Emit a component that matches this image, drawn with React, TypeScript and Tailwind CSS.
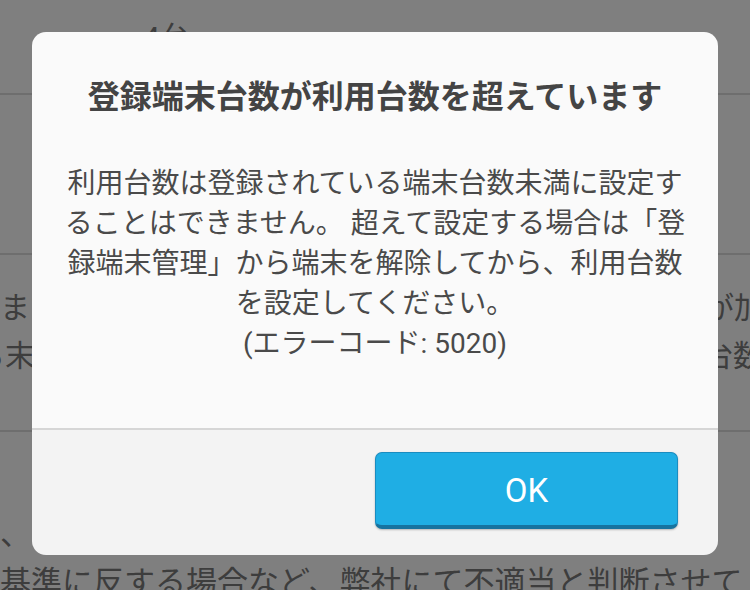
import React from 'react';

const bodyLines = [
  '利用台数は登録されている端末台数未満に設定す',
  'ることはできません。 超えて設定する場合は「登',
  '録端末管理」から端末を解除してから、利用台数',
  'を設定してください。',
  '(エラーコード: 5020)',
];

function BackgroundPage() {
  return (
    <div className="flex flex-col bg-white text-[30px] text-[#7a7a7a] leading-[48px]">
      {/* top row, mostly under the dialog */}
      <div className="h-[95px] border-b-2 border-[#dcdcdc] pl-[143px] pt-[14px]">4台</div>
      <div className="h-[160px] border-b-2 border-[#dcdcdc]" />
      <div className="h-[177px] border-b-2 border-[#dcdcdc] pt-[29px] overflow-hidden">
        <div className="flex justify-between">
          <span>まで</span>
          <span className="mr-[-14px]">が加</span>
        </div>
        <div className="flex justify-between">
          <span className="ml-[-25px]">る末</span>
          <span className="mr-[-13px]">台数</span>
        </div>
      </div>
      <div className="pt-[79px] overflow-hidden whitespace-nowrap text-[31px]">
        <div>、</div>
        <div>基準に反する場合など、弊社にて不適当と判断させて</div>
      </div>
    </div>
  );
}

function ErrorDialog() {
  return (
    <div className="w-[686px] rounded-[14px] overflow-hidden">
      <div className="bg-[#fafafa] pt-[45px] pb-[64px] px-[28px] text-center border-b-2 border-[#d6d6d6]">
        <h2 className="text-[32px] leading-[40px] font-bold text-[#444]">
          登録端末台数が利用台数を超えています
        </h2>
        <p className="mt-[47px] text-[28px] leading-[40px] text-[#4a4a4a]">
          {bodyLines.map((line, i) => (
            <React.Fragment key={i}>
              {line}
              {i < bodyLines.length - 1 && <br />}
            </React.Fragment>
          ))}
        </p>
      </div>
      <div className="bg-[#f3f3f3] flex justify-end pt-[22px] pb-[26px] pr-[40px]">
        <button className="w-[303px] h-[77px] rounded-[7px] bg-[#1faee4] border border-[#1a8cc0] border-b-4 border-b-[#16739f] shadow-[0_1px_2px_rgba(0,0,0,0.25)] text-white text-[33px] pt-[4px] flex items-center justify-center">
          OK
        </button>
      </div>
    </div>
  );
}

export default function App() {
  return (
    <div className="relative w-full h-[590px] overflow-hidden font-[Roboto,'Noto_Sans_CJK_JP',sans-serif]">
      <BackgroundPage />
      {/* Dim overlay + dialog */}
      <div className="absolute inset-0 bg-black/50 pt-[32px] px-[32px]">
        <ErrorDialog />
      </div>
    </div>
  );
}
